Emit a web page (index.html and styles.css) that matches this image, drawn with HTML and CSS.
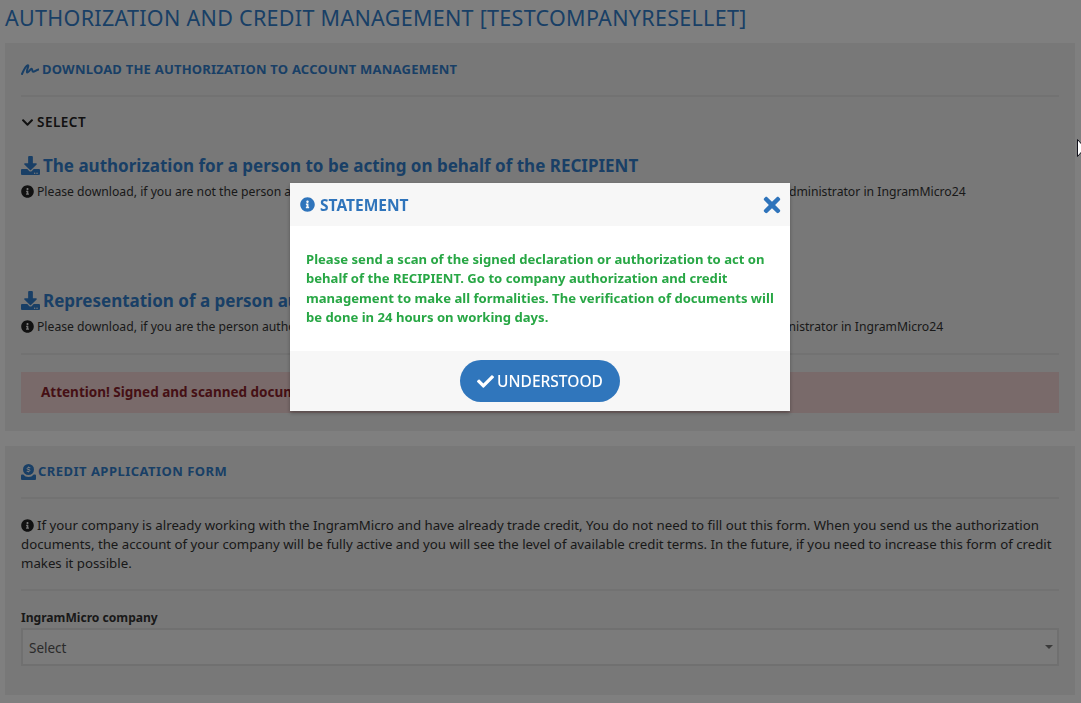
FILE: index.html
```html
<!DOCTYPE html>
<html lang="en">
<head>
<meta charset="utf-8">
<title>Authorization and credit management</title>
<link rel="stylesheet" href="styles.css">
</head>
<body>
<svg class="defs" width="0" height="0">
  <symbol id="i-info" viewBox="0 0 512 512"><path fill="currentColor" d="M256 8C119.043 8 8 119.083 8 256c0 136.997 111.043 248 248 248s248-111.003 248-248C504 119.083 392.957 8 256 8zm0 110c23.196 0 42 18.804 42 42s-18.804 42-42 42-42-18.804-42-42 18.804-42 42-42zm56 254c0 6.627-5.373 12-12 12h-88c-6.627 0-12-5.373-12-12v-24c0-6.627 5.373-12 12-12h12v-64h-12c-6.627 0-12-5.373-12-12v-24c0-6.627 5.373-12 12-12h64c6.627 0 12 5.373 12 12v100h12c6.627 0 12 5.373 12 12v24z"/></symbol>
  <symbol id="i-download" viewBox="0 0 512 512"><path fill="currentColor" d="M216 0h80c13.3 0 24 10.7 24 24v168h87.7c17.8 0 26.7 21.5 14.1 34.1L269.7 378.3c-7.5 7.5-19.8 7.5-27.3 0L90.1 226.1c-12.6-12.6-3.7-34.1 14.1-34.1H192V24c0-13.3 10.7-24 24-24zm296 376v112c0 13.3-10.7 24-24 24H24c-13.3 0-24-10.7-24-24V376c0-13.3 10.7-24 24-24h146.7l49 49c20.1 20.1 52.5 20.1 72.6 0l49-49H488c13.3 0 24 10.7 24 24zm-124 88c0-11-9-20-20-20s-20 9-20 20 9 20 20 20 20-9 20-20zm64 0c0-11-9-20-20-20s-20 9-20 20 9 20 20 20 20-9 20-20z"/></symbol>
</svg>
<main class="page">
  <h1 class="title">AUTHORIZATION AND CREDIT MANAGEMENT [TESTCOMPANYRESELLET]</h1>
  <section class="panel panel-auth">
    <h2 class="panel-head"><svg class="ico-sign" viewBox="0 0 18 11"><path d="M1 10C2.500 6.500 5 1.500 6.800 1.200 8.500 1 5 7 6 8.300 7 9.400 9.500 4.600 10.600 4.800 11.800 5 10.800 7.800 12.200 7.800 13.800 7.800 15 6 17.500 5.500" fill="none" stroke="currentColor" stroke-width="2" stroke-linecap="round" stroke-linejoin="round"/></svg>DOWNLOAD THE AUTHORIZATION TO ACCOUNT MANAGEMENT</h2>
    <hr class="rule">
    <div class="select-head"><svg class="ico-chev" viewBox="0 0 448 512"><path fill="currentColor" d="M207.029 381.476L12.686 187.132c-9.373-9.373-9.373-24.569 0-33.941l22.667-22.667c9.357-9.357 24.522-9.375 33.901-.04L224 284.505l154.745-154.021c9.379-9.335 24.544-9.317 33.901.04l22.667 22.667c9.373 9.373 9.373 24.569 0 33.941L240.971 381.476c-9.373 9.372-24.569 9.372-33.942 0z"/></svg>SELECT</div>
    <div class="doc doc-first">
      <h3 class="doc-title"><svg class="ico-dl"><use href="#i-download"/></svg>The authorization for a person to be acting on behalf of the RECIPIENT</h3>
      <p class="doc-note"><svg class="ico-info"><use href="#i-info"/></svg>Please download, if you are not the person authorized to represent the company according to the court record and you will be the administrator in IngramMicro24</p>
    </div>
    <div class="doc doc-second">
      <h3 class="doc-title"><svg class="ico-dl"><use href="#i-download"/></svg>Representation of a person authorized to represent the RECIPIENT</h3>
      <p class="doc-note"><svg class="ico-info"><use href="#i-info"/></svg>Please download, if you are the person authorized to represent the company according to the court record and you will be the administrator in IngramMicro24</p>
    </div>
    <hr class="rule">
    <div class="alert">Attention! Signed and scanned documents should be sent to company authorization and credit</div>
  </section>
  <section class="panel panel-credit">
    <h2 class="panel-head head-credit"><svg class="ico-donate" viewBox="0 0 15 16"><circle cx="7.500" cy="5.500" r="5.500" fill="currentColor"/><path d="M9.300 3.700H6.700a1 1 0 0 0 0 1.800h1.600a1 1 0 0 1 0 1.800H5.700M7.500 2.700v1M7.500 7.300v1" fill="none" stroke="#fff" stroke-width="1"/><path d="M1 10.500h1.300a6.500 6.500 0 0 0 10.400 0H14a1 1 0 0 1 1 1v3.500a1 1 0 0 1-1 1H1a1 1 0 0 1-1-1v-3.500a1 1 0 0 1 1-1z" fill="currentColor"/></svg>CREDIT APPLICATION FORM</h2>
    <hr class="rule">
    <p class="intro"><svg class="ico-info"><use href="#i-info"/></svg>If your company is already working with the IngramMicro and have already trade credit, You do not need to fill out this form. When you send us the authorization documents, the account of your company will be fully active and you will see the level of available credit terms. In the future, if you need to increase this form of credit makes it possible.</p>
    <hr class="rule">
    <div class="field-label">IngramMicro company</div>
    <div class="select-box"><span>Select</span><i class="caret"></i></div>
  </section>
</main>
<div class="overlay">
  <div class="modal">
    <header class="modal-head">
      <div class="modal-title"><svg class="ico-info-lg"><use href="#i-info"/></svg><span class="modal-title-text">STATEMENT</span></div>
      <svg class="ico-close" viewBox="0 0 352 512"><path fill="currentColor" d="M242.72 256l100.07-100.07c12.28-12.28 12.28-32.19 0-44.48l-22.24-22.24c-12.28-12.28-32.19-12.28-44.48 0L176 189.28 75.93 89.21c-12.28-12.28-32.19-12.28-44.48 0L9.21 111.45c-12.28 12.28-12.28 32.19 0 44.48L109.28 256 9.21 356.07c-12.28 12.28-12.28 32.19 0 44.48l22.24 22.24c12.28 12.28 32.2 12.28 44.48 0L176 322.72l100.07 100.07c12.28 12.28 32.2 12.28 44.48 0l22.24-22.24c12.28-12.28 12.28-32.19 0-44.48L242.72 256z"/></svg>
    </header>
    <div class="modal-body">Please send a scan of the signed declaration or authorization to act on behalf of the RECIPIENT. Go to company authorization and credit management to make all formalities. The verification of documents will be done in 24 hours on working days.</div>
    <footer class="modal-foot">
      <button class="btn-ok"><svg class="ico-check" viewBox="0 0 512 512"><path fill="currentColor" d="M173.898 439.404l-166.4-166.4c-9.997-9.997-9.997-26.206 0-36.204l36.203-36.204c9.997-9.998 26.207-9.998 36.204 0L192 312.69 432.095 72.596c9.997-9.997 26.207-9.997 36.204 0l36.203 36.204c9.997 9.997 9.997 26.206 0 36.204l-294.4 294.401c-9.998 9.997-26.207 9.997-36.204-.001z"/></svg>UNDERSTOOD</button>
    </footer>
  </div>
</div>
<svg class="cursor" viewBox="0 0 5 18"><path d="M0.500 0.500L4.500 5V13L0.500 17.500Z" fill="#fff" stroke="#10101a" stroke-width="1"/></svg>
</body>
</html>
```

FILE: styles.css
```css
* { box-sizing: border-box; }
html, body { margin: 0; height: 703px; overflow: hidden; }
body { background: #fff; color: #333; font-family: "Noto Sans", "Liberation Sans", sans-serif; font-size: 13px; line-height: 19px; }
.defs { position: absolute; }
.page { padding: 0 6px 0 5px; }
.title { margin: 0; padding: 3px 0 11px; font-size: 21.500px; line-height: 29px; font-weight: 400; color: #337fcc; letter-spacing: .3px; white-space: nowrap; }
.panel { background: #f1f1f1; padding: 0 16px; }
.panel-auth { height: 388px; }
.panel-credit { margin-top: 15px; height: 249px; }
.panel-head { margin: 0; height: 52px; display: flex; align-items: center; font-size: 13px; font-weight: 700; letter-spacing: .22px; color: #337fcc; white-space: nowrap; }
.head-credit { height: 51px; letter-spacing: .47px; }
.rule { margin: 0; border: 0; border-top: 2px solid #e4e4e4; }
.ico-sign { width: 18px; height: 11px; margin-right: 3px; }
.ico-donate { width: 15px; height: 16px; margin-right: 2px; }
.ico-chev { width: 13px; height: 13px; margin-right: 3px; color: #222; }
.select-head { display: flex; align-items: center; height: 19px; margin-top: 16px; font-size: 13.500px; font-weight: 600; letter-spacing: .5px; color: #222; }
.doc-first { margin-top: 20px; height: 135px; }
.doc-second { height: 66px; }
.doc-title { margin: 0; height: 27px; display: flex; align-items: center; font-size: 17px; font-weight: 700; color: #337fcc; white-space: nowrap; }
.ico-dl { width: 19px; height: 19px; margin-right: 3px; flex: none; }
.doc-note { margin: 3px 0 0; height: 19px; display: flex; align-items: center; font-size: 12.200px; white-space: nowrap; color: #333; }
.ico-info { width: 13px; height: 13px; margin-right: 3px; flex: none; color: #222; }
.alert { margin-top: 17px; height: 41px; padding: 0 20px; display: flex; align-items: center; background: #f2d4d4; font-size: 13.500px; font-weight: 700; color: #8a1f2a; white-space: nowrap; }
.intro { margin: 17px 0 16px; font-size: 13.250px; line-height: 19px; }
.intro .ico-info { vertical-align: -2px; }
.field-label { margin-top: 17px; height: 19px; font-weight: 700; font-size: 12.100px; color: #333; }
.select-box { margin-top: 1px; height: 38px; border: 2px solid #e0e0e0; display: flex; align-items: center; justify-content: space-between; padding: 3px 4px 0 6px; color: #555; font-size: 13.500px; background: #f6f6f6; }
.caret { width: 0; height: 0; border: 4px solid transparent; border-top-color: #777; border-bottom: 0; margin-top: -3px; }
.overlay { position: fixed; inset: 0; background: rgba(0, 0, 0, .5); padding: 183px 1px 0 0; }
.modal { width: 500px; margin: 0 auto; background: #fff; box-shadow: 0 2px 4px rgba(0, 0, 0, .3); }
.modal-head { height: 43px; background: #f7f7f7; padding: 0 9px 0 10px; display: flex; align-items: center; justify-content: space-between; }
.modal-title { display: flex; align-items: center; font-size: 15.500px; font-weight: 700; color: #2f74bb; }
.modal-title-text { padding-top: 1px; }
.ico-info-lg { width: 15px; height: 15px; margin-right: 5px; }
.ico-close { width: 18px; height: 24px; color: #2f74bb; }
.modal-body { height: 125px; padding: 24px 16px 0; color: #28a745; font-weight: 700; font-size: 13.100px; line-height: 19.300px; }
.modal-foot { height: 60px; background: #f7f7f7; padding-top: 9px; display: flex; justify-content: center; }
.btn-ok { width: 160px; height: 42px; border: 0; border-radius: 21px; background: #3076bc; color: #fff; font-family: inherit; font-size: 15.500px; font-weight: 500; display: flex; align-items: center; justify-content: center; padding: 0; }
.ico-check { width: 17px; height: 17px; margin-right: 3px; }
.cursor { position: fixed; left: 1077px; top: 139px; width: 5px; height: 18px; }
```
